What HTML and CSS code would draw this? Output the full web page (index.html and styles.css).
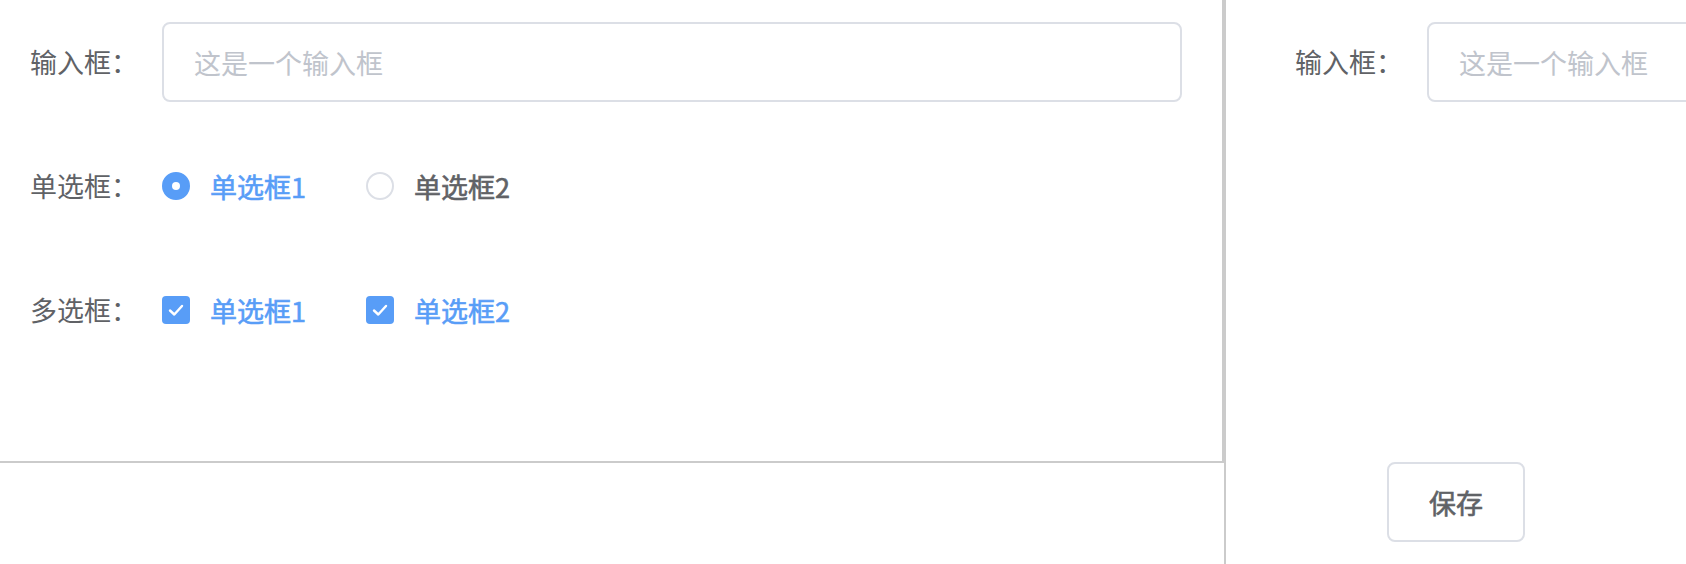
FILE: index.html
```html
<!DOCTYPE html>
<html lang="zh-CN">
<head>
<meta charset="utf-8">
<title>表单</title>
<link rel="stylesheet" href="styles.css">
</head>
<body>
<div class="page">
  <div class="left">
    <div class="panel">
      <div class="form">
        <div class="item">
          <label class="lbl">输入框：</label>
          <div class="ctrl"><input class="input input-wide" type="text" placeholder="这是一个输入框"></div>
        </div>
        <div class="item">
          <label class="lbl">单选框：</label>
          <div class="ctrl group">
            <span class="opt is-checked"><span class="radio radio-on"><span class="dot"></span></span><span class="opt-text">单选框1</span></span>
            <span class="opt"><span class="radio"></span><span class="opt-text">单选框2</span></span>
          </div>
        </div>
        <div class="item">
          <label class="lbl">多选框：</label>
          <div class="ctrl group">
            <span class="opt is-checked"><span class="check"><svg viewBox="0 0 28 28" width="28" height="28"><polyline points="8,14.5 12.3,18.5 20,10" fill="none" stroke="#fff" stroke-width="2.4" stroke-linecap="round" stroke-linejoin="round"/></svg></span><span class="opt-text">单选框1</span></span>
            <span class="opt is-checked"><span class="check"><svg viewBox="0 0 28 28" width="28" height="28"><polyline points="8,14.5 12.3,18.5 20,10" fill="none" stroke="#fff" stroke-width="2.4" stroke-linecap="round" stroke-linejoin="round"/></svg></span><span class="opt-text">单选框2</span></span>
          </div>
        </div>
      </div>
    </div>
  </div>
  <div class="right">
    <div class="form form-right">
      <div class="item">
        <label class="lbl">输入框：</label>
        <div class="ctrl"><input class="input input-narrow" type="text" placeholder="这是一个输入框"></div>
      </div>
    </div>
    <div class="footer">
      <button class="btn" type="button">保存</button>
    </div>
  </div>
</div>
</body>
</html>
```

FILE: styles.css
```css
html, body {
  margin: 0;
  padding: 0;
  background: #fff;
}
body {
  font-family: "Noto Sans CJK SC", "Noto Sans", sans-serif;
  color: #606266;
  overflow: hidden;
}
.page {
  display: flex;
  width: 1686px;
  height: 564px;
}
.left {
  width: 1224px;
  flex: none;
}
.panel {
  height: 463px;
  box-sizing: border-box;
  border-right: 2px solid #cbcbcb;
  border-bottom: 2px solid #cbcbcb;
}
.right {
  flex: 1;
  border-left: 2px solid #cbcbcb;
  overflow: hidden;
  min-width: 0;
}
.form {
  padding-top: 22px;
}
.form-right {
  padding-left: 39px;
}
.item {
  display: flex;
  align-items: center;
  height: 80px;
  margin-bottom: 44px;
}
.lbl {
  width: 162px;
  box-sizing: border-box;
  padding-right: 24px;
  text-align: right;
  font-size: 27px;
  line-height: 80px;
  color: #606266;
  flex: none;
}
.ctrl {
  display: flex;
  align-items: center;
  height: 80px;
}
.input {
  height: 80px;
  box-sizing: border-box;
  border: 2px solid #dcdfe6;
  border-radius: 8px;
  padding: 0 30px;
  font-family: "Noto Sans CJK SC", "Noto Sans", sans-serif;
  font-size: 27px;
  color: #606266;
  outline: none;
  background: #fff;
}
.input::placeholder {
  color: #c0c4cc;
}
.input-wide {
  width: 1020px;
}
.input-narrow {
  width: 400px;
}
.group {
  gap: 60px;
}
.opt {
  display: flex;
  align-items: center;
  gap: 20px;
}
.opt-text {
  font-size: 27px;
  font-weight: 400;
  -webkit-text-stroke: 0.6px currentColor;
  color: #606266;
}
.is-checked .opt-text {
  color: #589df7;
}
.radio {
  width: 28px;
  height: 28px;
  box-sizing: border-box;
  border: 2px solid #dcdfe6;
  border-radius: 50%;
  background: #fff;
  display: flex;
  align-items: center;
  justify-content: center;
}
.radio-on {
  border-color: #589df7;
  background: #589df7;
}
.dot {
  width: 8px;
  height: 8px;
  border-radius: 50%;
  background: #fff;
}
.check {
  width: 28px;
  height: 28px;
  border-radius: 4px;
  background: #589df7;
  display: flex;
}
.footer {
  display: flex;
  justify-content: center;
  margin-top: 360px;
}
.btn {
  height: 80px;
  padding: 0 40px;
  border: 2px solid #dcdfe6;
  border-radius: 8px;
  background: #fff;
  font-family: "Noto Sans CJK SC", "Noto Sans", sans-serif;
  font-size: 27px;
  font-weight: 400;
  -webkit-text-stroke: 0.6px currentColor;
  color: #606266;
}
```
